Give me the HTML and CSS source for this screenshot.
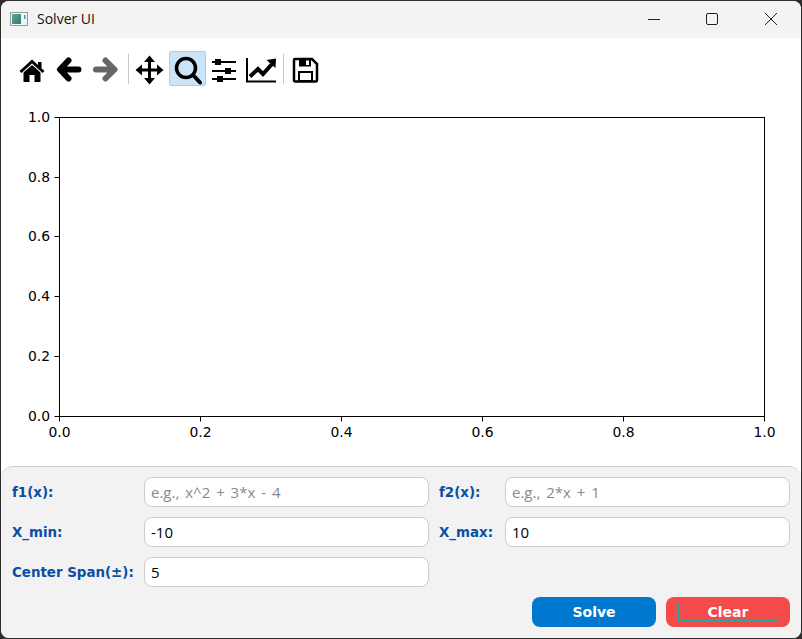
FILE: index.html
```html
<!DOCTYPE html>
<html lang="en">
<head>
<meta charset="utf-8">
<title>Solver UI</title>
<link rel="stylesheet" href="styles.css">
</head>
<body>
<div class="window">
  <header class="titlebar">
    <svg class="app-icon" width="18" height="14" viewBox="0 0 18 14">
      <defs><linearGradient id="ag" x1="0" y1="0" x2="1" y2="1"><stop offset="0" stop-color="#5fa3a8"/><stop offset="1" stop-color="#2f7f5f"/></linearGradient></defs>
      <rect x="0.5" y="0.5" width="17" height="13" fill="#f4f4f4" stroke="#9a9a9a"/>
      <rect x="2" y="2" width="9" height="10" fill="url(#ag)"/>
      <rect x="14" y="3" width="1.5" height="4" fill="#4f9aa0"/>
    </svg>
    <span class="title">Solver UI</span>
    <div class="controls">
      <div class="ctl"><svg width="14" height="14" viewBox="0 0 14 14"><path d="M1 7.500H13" stroke="#222" fill="none"/></svg></div>
      <div class="ctl"><svg width="14" height="14" viewBox="0 0 14 14"><rect x="1.500" y="1.500" width="11" height="11" rx="1.500" stroke="#222" fill="none"/></svg></div>
      <div class="ctl"><svg width="14" height="14" viewBox="0 0 14 14"><path d="M1 1L13 13M13 1L1 13" stroke="#222" fill="none"/></svg></div>
    </div>
  </header>

  <nav class="toolbar">
    <div class="tool"><svg width="37" height="35" viewBox="0 0 37 35"><path d="M6.500 21L18 10.500L29.500 21" fill="none" stroke="#000" stroke-width="3"/><rect x="24" y="11" width="3.500" height="6"/><path d="M9.500 21.500L18 14L26.500 21.500V31H20.500V24H15.500V31H9.500Z"/></svg></div>
    <div class="tool"><svg width="37" height="35" viewBox="0 0 37 35"><path d="M27.500 18.500H11M17.500 9.500L9 18.500L17.500 27.500" fill="none" stroke="#000" stroke-width="6" stroke-linecap="round" stroke-linejoin="round"/></svg></div>
    <div class="tool"><svg width="37" height="35" viewBox="0 0 37 35"><path d="M8 18.500H25M17.500 9.500L26.500 18.500L17.500 27.500" fill="none" stroke="#666" stroke-width="6" stroke-linecap="round" stroke-linejoin="round"/></svg></div>
    <div class="sep"></div>
    <div class="tool"><svg width="37" height="35" viewBox="0 0 37 35"><path d="M17.500 9V29M8 19H27" stroke="#000" stroke-width="3" fill="none"/><path d="M17.500 4.500L23 11H12ZM17.500 33.500L12 27H23ZM3.500 19L10 13.500V24.500ZM31.500 19L25 24.500V13.500Z"/></svg></div>
    <div class="tool active"><svg width="35" height="33" viewBox="1 1 35 33"><circle cx="17" cy="17" r="9.500" fill="none" stroke="#000" stroke-width="3.500"/><path d="M24.500 24.500L31 31.500" stroke="#000" stroke-width="4" stroke-linecap="round"/></svg></div>
    <div class="tool"><svg width="37" height="35" viewBox="0 0 37 35"><path d="M6 11H30M6 20H30M6 28H30" stroke="#000" stroke-width="2" fill="none"/><rect x="9" y="8" width="6" height="6"/><rect x="19" y="17" width="6" height="6"/><rect x="11" y="25" width="6" height="6"/></svg></div>
    <div class="tool"><svg width="37" height="35" viewBox="0 0 37 35"><path d="M4 7V30.500H33" stroke="#000" stroke-width="2" fill="none"/><path d="M7 25.500L15 18L20 23L29 13" stroke="#000" stroke-width="4" fill="none"/><path d="M23.500 9L33 7.500L32.500 17Z"/></svg></div>
    <div class="sep"></div>
    <div class="tool"><svg width="37" height="35" viewBox="0 0 37 35"><path d="M8 8H25L30 13V29A1.500 1.500 0 0 1 28.500 30.500H8.500A1.500 1.500 0 0 1 7 29V9A1 1 0 0 1 8 8Z" fill="#fff" stroke="#000" stroke-width="2.500"/><path d="M12 8H24V15.500H12Z"/><rect x="19" y="9.500" width="3" height="4.500" fill="#fff"/><rect x="12" y="21" width="13" height="9" fill="#fff" stroke="#000" stroke-width="2"/></svg></div>
  </nav>

  <main class="plot">
    <svg class="axes" width="800" height="372" viewBox="0 93 800 372">
      <rect x="59.500" y="117.500" width="705" height="299" fill="#fff" stroke="#000"/>
      <path class="ticks" d="M59.500 416.500v5M200.500 416.500v5M341.500 416.500v5M482.500 416.500v5M623.500 416.500v5M764.500 416.500v5M59.500 416.500h-5M59.500 356.500h-5M59.500 296.500h-5M59.500 236.500h-5M59.500 177.500h-5M59.500 117.500h-5"/>
      <g class="ylab">
        <text x="50" y="122">1.0</text><text x="50" y="182">0.8</text><text x="50" y="241">0.6</text><text x="50" y="301">0.4</text><text x="50" y="361">0.2</text><text x="50" y="421">0.0</text>
      </g>
      <g class="xlab">
        <text x="59.500" y="437">0.0</text><text x="200.500" y="437">0.2</text><text x="341.500" y="437">0.4</text><text x="482.500" y="437">0.6</text><text x="623.500" y="437">0.8</text><text x="764.500" y="437">1.0</text>
      </g>
    </svg>
  </main>

  <section class="panel">
    <label class="lbl">f1(x):</label><input class="field" placeholder="e.g., x^2 + 3*x - 4">
    <label class="lbl">f2(x):</label><input class="field" placeholder="e.g., 2*x + 1">
    <label class="lbl">X_min:</label><input class="field" value="-10">
    <label class="lbl">X_max:</label><input class="field" value="10">
    <label class="lbl">Center Span(±):</label><input class="field" value="5">
    <div class="actions">
      <button class="btn solve">Solve</button>
      <button class="btn clear"><span class="focus">Clear</span></button>
    </div>
  </section>
</div>
</body>
</html>
```

FILE: styles.css
```css
* { box-sizing: border-box; }
html, body { margin: 0; height: 100%; }
body { background: #2e2e2e; padding: 1px; overflow: hidden; }
.window {
  height: 637px;
  display: flex;
  flex-direction: column;
  background: #fff;
  border-radius: 8px;
  overflow: hidden;
}
.titlebar {
  height: 37px;
  flex: none;
  background: #f3f3f3;
  display: flex;
  align-items: center;
  padding: 0 1px 2px 9px;
}
.app-icon { flex: none; margin-right: 9px; }
.title { font: 14px "Open Sans", sans-serif; color: #111; }
.controls { margin-left: auto; display: flex; }
.ctl { width: 58.500px; height: 35px; display: flex; align-items: center; justify-content: center; }
.toolbar {
  flex: none;
  display: flex;
  align-items: center;
  padding: 13px 13px 7px;
  height: 55px;
}
.tool { width: 37px; height: 35px; flex: none; }
.tool svg { display: block; }
.tool.active { background: #cce4f7; border: 1px solid #a6d0f2; border-radius: 2px; }
.sep { width: 1px; height: 30px; background: #c8c8c8; margin: 0 3px; flex: none; }
.plot { flex: 1; min-height: 0; background: #fff; }
.axes { display: block; margin-left: -1px; }
.ticks { stroke: #000; fill: none; }
.ylab text, .xlab text { font: 13.900px "DejaVu Sans", sans-serif; fill: #000; }
.ylab text { text-anchor: end; }
.xlab text { text-anchor: middle; }
.panel {
  flex: none;
  height: 172px;
  background: #f2f2f2;
  border-top: 1px solid #cfcfcf;
  border-radius: 12px 12px 0 0;
  padding: 10px 11px 0;
  display: grid;
  grid-template-columns: 122px 285px 56px 285px;
  grid-auto-rows: 30px;
  column-gap: 10px;
  row-gap: 10px;
  align-items: center;
}
.lbl { font: bold 13.400px "DejaVu Sans", sans-serif; color: #0a4fa3; white-space: nowrap; }
.field {
  height: 30px;
  width: 100%;
  border: 1px solid #cccccc;
  border-radius: 8px;
  background: #fff;
  padding: 0 6px;
  font: 15px "Open Sans", sans-serif;
  word-spacing: 2px;
  color: #000;
  outline: none;
}
.field::placeholder { color: #8a8a8a; opacity: 1; }
.actions {
  grid-column: 1 / -1;
  grid-row: 4;
  display: flex;
  justify-content: flex-end;
  gap: 10px;
}
.btn {
  width: 124px;
  height: 30px;
  border: 0;
  border-radius: 8px;
  color: #fff;
  font: bold 14px "DejaVu Sans", sans-serif;
  padding: 0;
  display: flex;
  align-items: center;
  justify-content: center;
}
.solve { background: #0078d0; }
.clear { background: #f44a4a; }
.focus {
  display: block;
  width: 100px;
  height: 18px;
  line-height: 19px;
  background:
    repeating-linear-gradient(90deg, #20b0a8 0 1px, transparent 1px 2px) top / 100% 1px no-repeat,
    repeating-linear-gradient(90deg, #20b0a8 0 1px, transparent 1px 2px) bottom / 100% 1px no-repeat,
    repeating-linear-gradient(0deg, #20b0a8 0 1px, transparent 1px 2px) left / 1px 100% no-repeat,
    repeating-linear-gradient(0deg, #20b0a8 0 1px, transparent 1px 2px) right / 1px 100% no-repeat;
}
```
